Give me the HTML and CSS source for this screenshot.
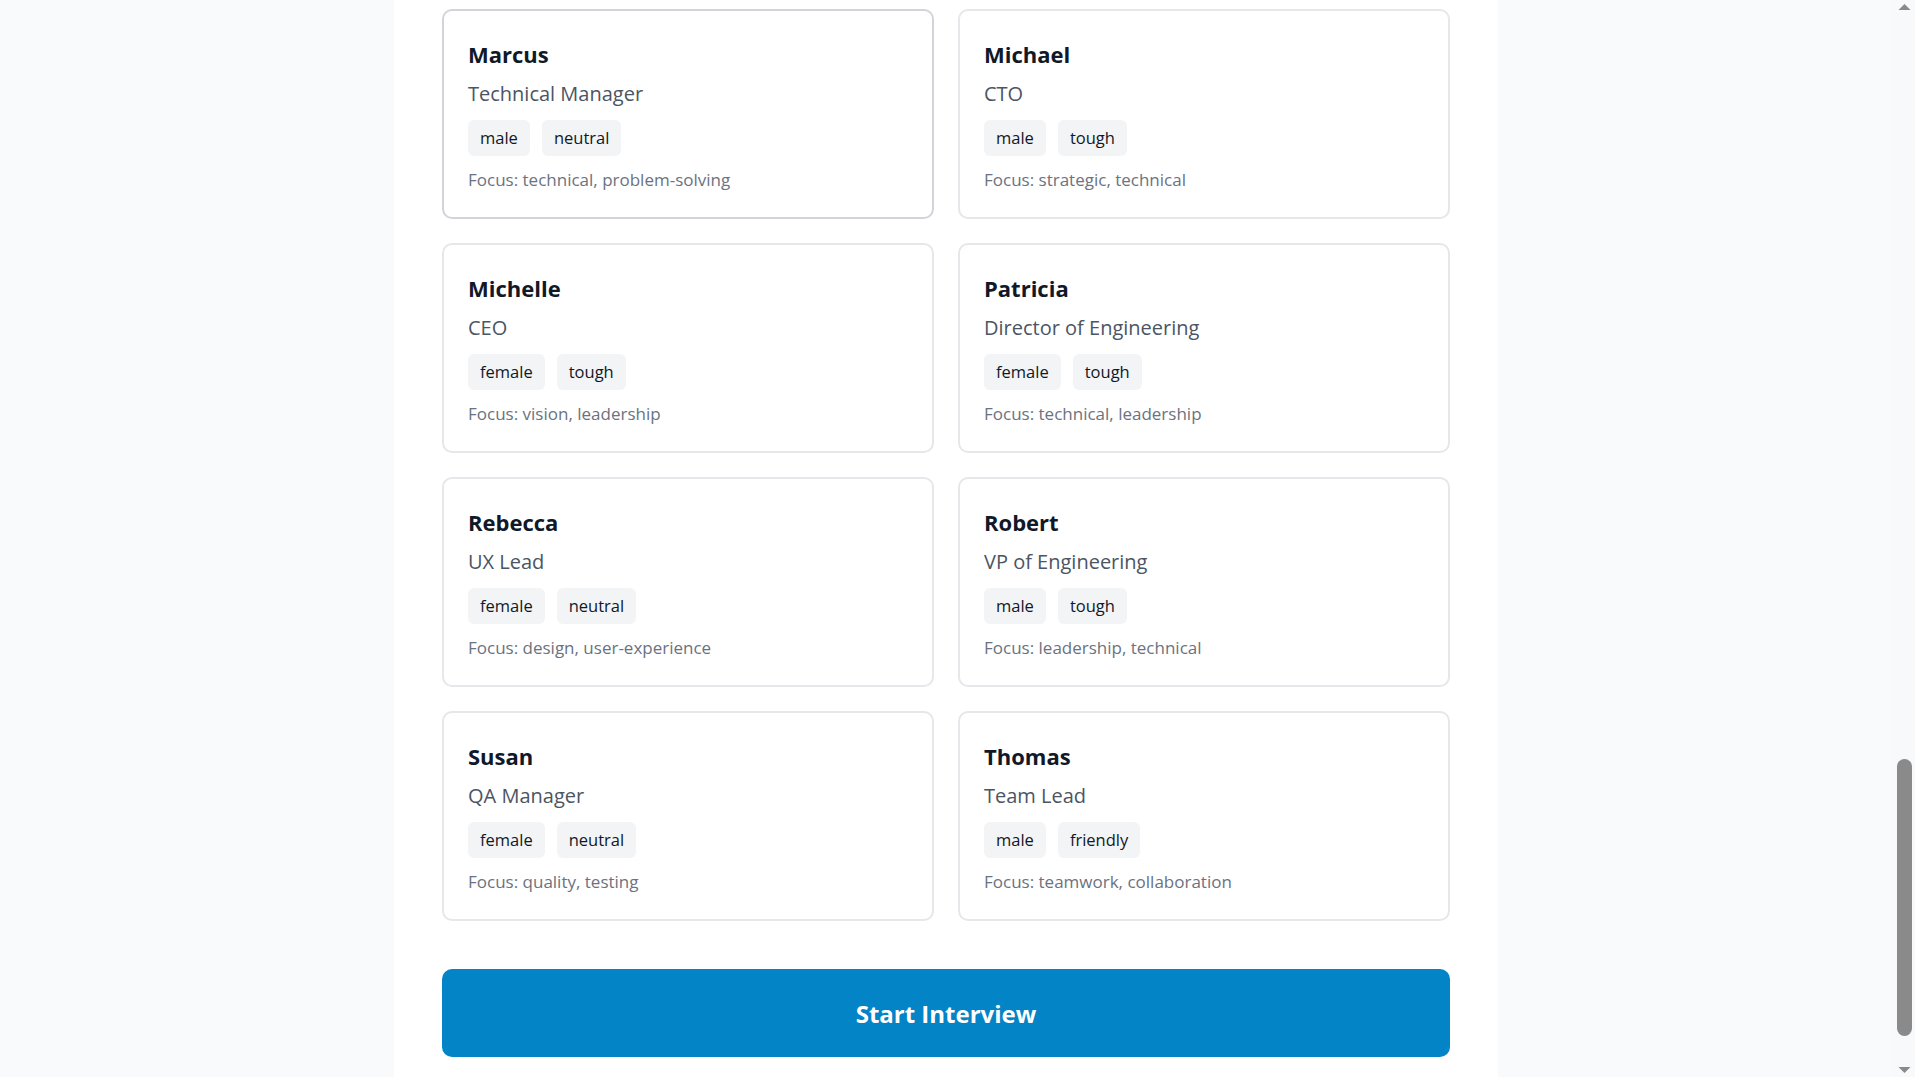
FILE: index.html
```html
<!DOCTYPE html>
<html lang="en">
<head>
<meta charset="utf-8">
<title>Interview Practice</title>
<link rel="stylesheet" href="styles.css">
</head>
<body>
<div class="viewport">
  <main class="page">
    <section class="grid">
      <article class="card card--hover"><h3 class="card__name">Marcus</h3><p class="card__role">Technical Manager</p><div class="tags"><span class="tag">male</span><span class="tag">neutral</span></div><p class="card__focus">Focus: technical, problem-solving</p></article>
      <article class="card"><h3 class="card__name">Michael</h3><p class="card__role">CTO</p><div class="tags"><span class="tag">male</span><span class="tag">tough</span></div><p class="card__focus">Focus: strategic, technical</p></article>
      <article class="card"><h3 class="card__name">Michelle</h3><p class="card__role">CEO</p><div class="tags"><span class="tag">female</span><span class="tag">tough</span></div><p class="card__focus">Focus: vision, leadership</p></article>
      <article class="card"><h3 class="card__name">Patricia</h3><p class="card__role">Director of Engineering</p><div class="tags"><span class="tag">female</span><span class="tag">tough</span></div><p class="card__focus">Focus: technical, leadership</p></article>
      <article class="card"><h3 class="card__name">Rebecca</h3><p class="card__role">UX Lead</p><div class="tags"><span class="tag">female</span><span class="tag">neutral</span></div><p class="card__focus">Focus: design, user-experience</p></article>
      <article class="card"><h3 class="card__name">Robert</h3><p class="card__role">VP of Engineering</p><div class="tags"><span class="tag">male</span><span class="tag">tough</span></div><p class="card__focus">Focus: leadership, technical</p></article>
      <article class="card"><h3 class="card__name">Susan</h3><p class="card__role">QA Manager</p><div class="tags"><span class="tag">female</span><span class="tag">neutral</span></div><p class="card__focus">Focus: quality, testing</p></article>
      <article class="card"><h3 class="card__name">Thomas</h3><p class="card__role">Team Lead</p><div class="tags"><span class="tag">male</span><span class="tag">friendly</span></div><p class="card__focus">Focus: teamwork, collaboration</p></article>
    </section>
    <button class="start" type="button">Start Interview</button>
  </main>
</div>
<aside class="scrollbar" aria-hidden="true">
  <svg class="scrollbar__arrow" width="14" height="8" viewBox="0 0 14 8"><path d="M1 7 L7 1 L13 7 Z" fill="#8a8a8a"/></svg>
  <div class="scrollbar__track"><div class="scrollbar__thumb"></div></div>
  <svg class="scrollbar__arrow" width="14" height="8" viewBox="0 0 14 8"><path d="M1 1 L7 7 L13 1 Z" fill="#8a8a8a"/></svg>
</aside>
</body>
</html>
```

FILE: styles.css
```css
html, body {
  margin: 0;
  padding: 0;
  height: 100%;
  overflow: hidden;
}

body {
  display: flex;
  background: #f9fafb;
  font-family: "Open Sans", "Noto Sans", "Liberation Sans", sans-serif;
  color: #111827;
}

.viewport {
  flex: 1;
  display: flex;
  justify-content: center;
  min-width: 0;
}

.page {
  box-sizing: border-box;
  width: 1104px;
  padding: 9px 48px 20px;
  background: #ffffff;
  display: flex;
  flex-direction: column;
}

.grid {
  display: grid;
  grid-template-columns: 1fr 1fr;
  gap: 24px;
}

.card {
  border: 2px solid #e5e7eb;
  border-radius: 10px;
  padding: 25px 24px;
  background: #ffffff;
  display: flex;
  flex-direction: column;
  align-items: flex-start;
}

.card--hover {
  border-color: #d1d5db;
}

.card__name {
  margin: 0;
  font-size: 22px;
  line-height: 36px;
  font-weight: 700;
  color: #111827;
}

.card__role {
  margin: 8px 0 0;
  font-size: 20px;
  line-height: 28px;
  color: #4b5563;
}

.tags {
  display: flex;
  gap: 12px;
  margin-top: 12px;
}

.tag {
  background: #f3f4f6;
  border-radius: 6px;
  padding: 6px 12px;
  font-size: 16.5px;
  line-height: 24px;
  color: #111827;
}

.card__focus {
  margin: 12px 0 0;
  font-size: 17px;
  line-height: 24px;
  color: #6b7280;
}

.start {
  margin-top: 48px;
  height: 88px;
  border: none;
  border-radius: 10px;
  background: #0284c7;
  color: #ffffff;
  font-family: "Open Sans", "Noto Sans", "Liberation Sans", sans-serif;
  font-size: 24px;
  font-weight: 700;
  cursor: pointer;
}

.scrollbar {
  width: 23px;
  flex: none;
  display: flex;
  flex-direction: column;
  align-items: flex-end;
  padding: 3px 3px 3px 0;
  box-sizing: border-box;
  background: #f8f9fa;
}

.scrollbar__arrow {
  flex: none;
  width: 15px;
  display: block;
}

.scrollbar__track {
  flex: 1;
  width: 15px;
  display: flex;
  flex-direction: column;
  justify-content: flex-end;
  padding: 0 0 30px;
}

.scrollbar__thumb {
  height: 277px;
  width: 15px;
  border-radius: 8px;
  background: #8a8a8a;
}
```
